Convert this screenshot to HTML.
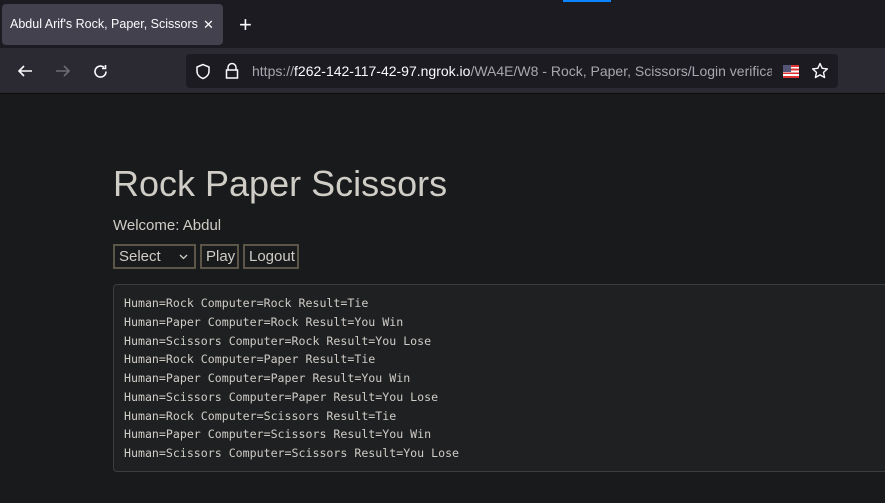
<!DOCTYPE html>
<html><head><meta charset="utf-8"><style>
*{margin:0;padding:0;box-sizing:border-box}
body{width:885px;height:503px;overflow:hidden;background:#181a1b;font-family:"Liberation Sans",sans-serif;position:relative}
.tabbar{position:absolute;left:0;top:0;width:885px;height:48px;background:#1c1b22}
.tab{position:absolute;left:2px;top:4px;width:221px;height:41px;background:#42414d;border-radius:4px;color:#fbfbfe;font-size:12.5px;line-height:41px}
.tab .t{position:absolute;left:8px;top:0;width:188px;white-space:nowrap;overflow:hidden}
.tab .x{position:absolute;left:201px;top:0;font-size:13px}
.plus{position:absolute;left:239px;top:12px;color:#fbfbfe;font-size:22px}
.blue{position:absolute;left:563px;top:0;width:48px;height:2px;background:#0a84ff}
.nav{position:absolute;left:0;top:48px;width:885px;height:46px;background:#2b2a33;border-bottom:1px solid #0c0c0d}
.url{position:absolute;left:186px;top:6px;width:652px;height:34px;background:#1c1b22;border-radius:4px}
.urltext{position:absolute;left:66px;top:9px;font-size:14px;color:#a8a7ad;white-space:nowrap;width:520px;overflow:hidden}
.urltext b{font-weight:normal;color:#fbfbfe}
.flag{position:absolute;left:597px;top:11px;width:16px;height:13px;background:repeating-linear-gradient(#d33 0 1.85px,#fff 1.85px 3.7px)}
.flag:before{content:"";position:absolute;left:0;top:0;width:8px;height:7px;background:#557}
h1{position:absolute;left:113px;top:163px;font-size:36px;font-weight:normal;color:#d0ccc6}
.wel{position:absolute;left:113px;top:217px;font-size:15px;color:#d0ccc6}
.ctl{position:absolute;top:244px;height:25px;border:2px solid #5c5649;color:#d0ccc6;font-size:15px;line-height:22px;background:#181a1b}
pre{position:absolute;left:113px;top:284px;width:790px;height:188px;background:#1e2022;border:1px solid #3a3e41;border-radius:4px;font-family:"DejaVu Sans Mono","Liberation Mono",monospace;font-size:11.6px;line-height:18.75px;color:#d0ccc6;padding:9px 10px}
</style></head><body>
<div class="tabbar"><div class="tab"><span class="t">Abdul Arif's Rock, Paper, Scissors Game</span><span class="x">✕</span></div><div class="plus">+</div><div class="blue"></div></div>
<div class="nav">
<svg style="position:absolute;left:16px;top:15px" width="18" height="16" viewBox="0 0 18 16"><path d="M16 8H3M8 3L3 8l5 5" stroke="#fbfbfe" stroke-width="1.6" fill="none"/></svg>
<svg style="position:absolute;left:54px;top:15px" width="18" height="16" viewBox="0 0 18 16"><path d="M2 8h13M10 3l5 5-5 5" stroke="#6d6c72" stroke-width="1.6" fill="none"/></svg>
<svg style="position:absolute;left:92px;top:15px" width="17" height="17" viewBox="0 0 17 17"><path d="M14 8.5A5.5 5.5 0 1 1 12 4.3M13.5 2v3.5H10" stroke="#fbfbfe" stroke-width="1.6" fill="none"/></svg>
<div class="url">
<svg style="position:absolute;left:9px;top:9px" width="16" height="17" viewBox="0 0 16 17"><path d="M8 1.5L2 4v4c0 4 3 6.5 6 7.5 3-1 6-3.5 6-7.5V4z" stroke="#fbfbfe" stroke-width="1.5" fill="none"/></svg>
<svg style="position:absolute;left:38px;top:8px" width="16" height="18" viewBox="0 0 16 18"><path d="M4 8V5.5a4 4 0 0 1 8 0V8M2.5 8h11v8h-11z" stroke="#fbfbfe" stroke-width="1.5" fill="none"/></svg>
<div class="urltext">https://<b>f262-142-117-42-97.ngrok.io</b>/WA4E/W8 - Rock, Paper, Scissors/Login verification</div>
<div class="flag"></div>
<svg style="position:absolute;left:625px;top:8px" width="18" height="18" viewBox="0 0 18 18"><path d="M9 1.5l2.2 4.8 5.2.6-3.9 3.5 1.1 5.1L9 12.9l-4.6 2.6 1.1-5.1L1.6 6.9l5.2-.6z" stroke="#fbfbfe" stroke-width="1.4" fill="none" stroke-linejoin="round"/></svg>
</div></div>
<h1>Rock Paper Scissors</h1>
<div class="wel">Welcome: Abdul</div>
<div class="ctl" style="left:113px;width:83px;padding-left:4px">Select<svg style="position:absolute;left:64px;top:8px" width="9" height="6" viewBox="0 0 9 6"><path d="M1 1l3.5 3.5L8 1" stroke="#d0ccc6" stroke-width="1.3" fill="none"/></svg></div>
<div class="ctl" style="left:200px;width:39px;padding-left:4px">Play</div>
<div class="ctl" style="left:243px;width:56px;padding-left:4px">Logout</div>
<pre>Human=Rock Computer=Rock Result=Tie
Human=Paper Computer=Rock Result=You Win
Human=Scissors Computer=Rock Result=You Lose
Human=Rock Computer=Paper Result=Tie
Human=Paper Computer=Paper Result=You Win
Human=Scissors Computer=Paper Result=You Lose
Human=Rock Computer=Scissors Result=Tie
Human=Paper Computer=Scissors Result=You Win
Human=Scissors Computer=Scissors Result=You Lose</pre>
</body></html>
